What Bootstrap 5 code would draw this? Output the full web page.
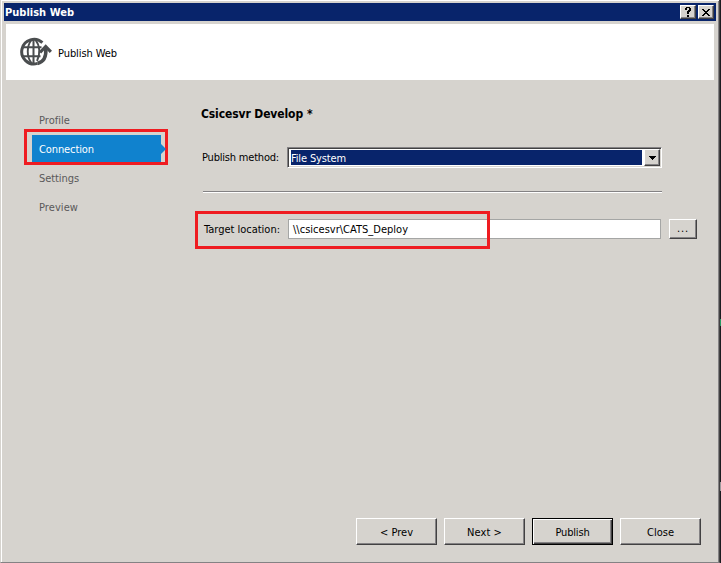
<!DOCTYPE html>
<html lang="en">
<head>
<meta charset="utf-8">
<meta name="viewport" content="width=device-width, initial-scale=1">
<title>Publish Web</title>
<link href="https://cdn.jsdelivr.net/npm/bootstrap@5.3.0/dist/css/bootstrap.min.css" rel="stylesheet">
<style>
body{margin:0;background:#1b1c20;overflow:hidden;font:11px/14px "DejaVu Sans Condensed","DejaVu Sans",sans-serif;font-stretch:condensed;color:#000}
.dialog{width:720px;height:563px;background:#d6d3ce;border:solid;border-width:0 1px 1px 1px;border-color:#d6d3ce #424142 #848284 #d6d3ce;box-shadow:inset 1px 1px #fff,inset -1px 0 #848284;padding:3px 3px 0}
.titlebar{height:18px;background:#08246b;color:#fff;font-weight:700;padding:0 2px 0 1px}
.titlebar .t{padding-top:1px}
.bevel{background:#d6d3ce;border:1px solid;border-color:#fff #424142 #424142 #fff;border-radius:0;box-shadow:inset -1px -1px #848284;color:#000;font-size:11px;line-height:14px;padding:0;display:flex;align-items:center;justify-content:center}
.sysbtn{width:16px;height:14px}
.sysbtn-gap{margin-right:2px}
.banner{height:56px;margin:3px 2px 0;background:#fff;padding:0 0 0 14px}
.banner svg{margin-right:6px}
.banner .t{padding-top:3px}
.workspace{height:438px}
.steps{width:132px;margin:26px 0 0 28px}
.step{height:27px;margin-bottom:2px;padding:2px 0 0 7px;color:#5a595a;border-radius:0;width:129px}
.step.active{background:#1082ce;color:#fff}
.step.active::after{content:"";position:absolute;left:129px;top:9px;border:5px solid transparent;border-left:5px solid #1082ce;border-right:0}
.mark-red{position:absolute;border:3px solid #ef1c21;pointer-events:none}
.mark-step{left:-8px;top:-6px;width:144px;height:36px}
.mark-path{left:-9px;top:-8px;width:295px;height:38px}
.settings{margin:25px 0 0 37px;width:510px}
.settings h1{font-size:12px;line-height:18px;font-weight:700;margin:0;white-space:nowrap}
.method-row{margin:24px 0 0 1px}
.path-row{margin:26px 0 0 3px}
.combo{width:375px;height:21px;background:#fff;border:1px solid;border-color:#848284 #fff #fff #848284;box-shadow:inset 1px 1px #424142,inset -1px -1px #d6d3ce;padding:2px 1px 2px 2px}
.combo-value{background:#08246b;color:#fff;height:15px;width:351px;flex:none;margin:0 2px 0 1px;padding:1px 0 0}
.combo-drop{width:17px;height:17px;margin-top:-1px}
.rule{height:2px;background:#848284;border-bottom:1px solid #fff;width:459px;margin:23px 0 0 2px}
.path-input{width:373px;height:20px;background:#fff;border:1px solid #a5a6a5;padding-left:4px}
.browse{width:28px;height:20px;margin-left:8px}
.lbl{width:85px;white-space:nowrap}
.path-row .lbl{width:84px}
.lbl .t,.path-input .t,.combo-value .t{padding-top:1px}
.actions{gap:7px;padding-right:15px}
.action{width:81px;height:27px;padding-top:2px}
.action.primary{border-color:#000;box-shadow:inset 1px 1px #fff,inset -1px -1px #424142,inset -2px -2px #848284}
.t{white-space:pre;display:inline-block}
.edge{position:absolute;left:720px;width:1px}
.edge-green{top:319px;height:7px;background:#299a63}
.edge-gray{top:482px;height:9px;background:#9c9a9c}
</style>
<script src="https://cdn.jsdelivr.net/npm/bootstrap@5.3.0/dist/js/bootstrap.bundle.min.js"></script>
</head>
<body>
<main class="dialog">
  <header class="titlebar d-flex align-items-center">
    <span class="t me-auto" data-w="68">Publish Web</span>
    <button class="bevel sysbtn sysbtn-gap" aria-label="Help"><svg width="8" height="10" shape-rendering="crispEdges"><path d="M2 0h4v1h1v3H6v1H5v2H3V4h1V3h1V1H3v2H1V1h1zM3 8h2v2H3z"/></svg></button>
    <button class="bevel sysbtn" aria-label="Close window"><svg width="8" height="7" shape-rendering="crispEdges"><path d="M0 0h2v1h1v1h2V1h1V0h2v1H7v1H6v1H5v1h1v1h1v1h1v1H6V6H5V5H3v1H2v1H0V6h1V5h1V4h1V3H2V2H1V1H0z"/></svg></button>
  </header>
  <section class="banner d-flex align-items-center">
    <svg width="32" height="30" viewBox="0 0 32 30" fill="none" stroke="#4a4d4f" aria-hidden="true">
      <path d="M22.4 5.6A12.3 12.3 0 1 0 17.5 26.4" stroke-width="3"/>
      <path d="M3 10.3h18.5M2 19.3h18.5M13.5 3v23" stroke-width="2"/>
      <path d="M11.5 3C6.5 9 6.5 20 11.5 26M15.5 3c4.5 5.5 5 14 1.5 21" stroke-width="1.9"/>
      <path d="M17.5 26.4C24 25 26.4 19 25.8 11" stroke-width="3.6"/>
      <path d="M20 15.5L25.7 9.5l5.2 5.4" stroke-width="3.2"/>
    </svg>
    <span class="t" data-w="58">Publish Web</span>
  </section>
  <div class="workspace d-flex">
    <nav class="steps">
      <a class="step d-flex align-items-center text-decoration-none"><span class="t" data-w="30">Profile</span></a>
      <a class="step active position-relative d-flex align-items-center text-decoration-none"><span class="t" data-w="54">Connection</span><i class="mark-red mark-step"></i></a>
      <a class="step d-flex align-items-center text-decoration-none"><span class="t" data-w="39">Settings</span></a>
      <a class="step d-flex align-items-center text-decoration-none"><span class="t" data-w="38">Preview</span></a>
    </nav>
    <section class="settings">
      <h1><span class="t" data-w="101">Csicesvr Develop</span><span class="t ms-1" data-w="8">*</span></h1>
      <div class="method-row d-flex align-items-center">
        <label class="lbl"><span class="t" data-w="76">Publish method:</span></label>
        <div class="combo d-flex"><div class="combo-value d-flex align-items-center"><span class="t" data-w="54">File System</span></div><button class="bevel combo-drop" aria-label="Open list"><svg width="7" height="4" shape-rendering="crispEdges"><path d="M0 0h7v1H6v1H5v1H4v1H3V3H2V2H1V1H0z"/></svg></button></div>
      </div>
      <div class="rule"></div>
      <div class="path-row position-relative d-flex align-items-center">
        <label class="lbl"><span class="t" data-w="75">Target location:</span></label>
        <div class="path-input d-flex align-items-center"><span class="t" data-w="114">\\csicesvr\CATS_Deploy</span></div>
        <button class="bevel browse"><span class="t" data-w="11">...</span></button>
        <i class="mark-red mark-path"></i>
      </div>
    </section>
  </div>
  <footer class="actions d-flex justify-content-end">
    <button class="bevel action"><span class="t" data-w="32">&lt; Prev</span></button>
    <button class="bevel action"><span class="t" data-w="34">Next &gt;</span></button>
    <button class="bevel action primary"><span class="t" data-w="33">Publish</span></button>
    <button class="bevel action"><span class="t" data-w="26">Close</span></button>
  </footer>
</main>
<i class="edge edge-green"></i>
<i class="edge edge-gray"></i>
<script>
// Fit each label to its nominal width through letter spacing.
document.querySelectorAll('.t').forEach(function (el) {
  var n = el.textContent.length;
  var gap = (Number(el.dataset.w) + 1 - el.getBoundingClientRect().width) / n;
  el.style.letterSpacing = gap.toFixed(3) + 'px';
});
</script>
</body>
</html>
